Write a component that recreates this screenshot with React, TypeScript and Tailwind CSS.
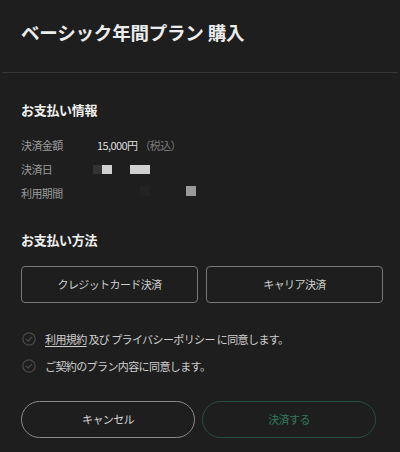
const jp = { fontFamily: '"Noto Sans CJK JP", "Noto Sans", sans-serif' };

function CheckCircle() {
  return (
    <svg width="14" height="14" viewBox="0 0 14 14" fill="none" className="shrink-0">
      <circle cx="7" cy="7" r="6.2" stroke="#4a4a4a" strokeWidth="1.2" />
      <path d="M4.3 7.2 L6.2 9 L9.8 5.2" stroke="#4a4a4a" strokeWidth="1.2" strokeLinecap="round" strokeLinejoin="round" />
    </svg>
  );
}

export default function App() {
  return (
    <div className="h-[452px] w-[400px] overflow-hidden bg-[#1e1e1e] text-[#e6e6e6]" style={jp}>
      {/* Header */}
      <div className="flex h-[72px] items-center px-[21px] pb-[8px]">
        <h1 className="text-[18.5px] font-bold leading-none tracking-[-0.2px] text-[#ececec]">
          ベーシック年間プラン 購入
        </h1>
      </div>
      <div className="mx-[2px] h-px bg-[#363636]" />

      <div className="pl-[21px] pr-[16px]">
        {/* Payment info */}
        <h2 className="mt-[27px] text-[13px] font-bold leading-[20px] tracking-[-0.3px] text-[#f0f0f0]">お支払い情報</h2>
        <div className="mt-[16px] flex flex-col gap-[6px] text-[11px] leading-[18px] tracking-[-0.6px]">
          <div className="flex items-center">
            <span className="w-[76px] text-[#9a9a9a]">決済金額</span>
            <span className="text-[#dedede]">15,000円</span>
            <span className="ml-[2px] text-[#7a7a7a]">（税込）</span>
          </div>
          <div className="flex h-[18px] items-center">
            <span className="w-[72px] text-[#9a9a9a]">決済日</span>
            <span className="h-[9px] w-[9px] bg-[#333]" />
            <span className="h-[9px] w-[10px] bg-[#d0d0d0]" />
            <span className="ml-[18px] h-[9px] w-[20px] bg-[#d0d0d0]" />
          </div>
          <div className="flex h-[18px] items-center">
            <span className="w-[119px] text-[#9a9a9a]">利用期間</span>
            <span className="mt-[-4px] h-[10px] w-[10px] bg-[#222]" />
            <span className="ml-[36px] mt-[-4px] h-[10px] w-[10px] bg-[#9a9a9a]" />
          </div>
        </div>

        {/* Payment method */}
        <h2 className="mt-[28px] text-[13px] font-bold leading-[20px] tracking-[-0.3px] text-[#f0f0f0]">お支払い方法</h2>
        <div className="mt-[16px] flex gap-[8px] text-[11px] tracking-[-0.6px]">
          <button className="h-[37px] w-[177px] shrink-0 rounded-[4px] border border-[#777] text-[#cfcfcf]">
            クレジットカード決済
          </button>
          <button className="h-[37px] w-[177px] shrink-0 rounded-[4px] border border-[#777] text-[#cfcfcf]">
            キャリア決済
          </button>
        </div>

        {/* Agreements */}
        <div className="mt-[27px] flex flex-col gap-[9px] pl-[1px] text-[11px] leading-[18px] tracking-[-0.6px] text-[#cfcfcf]">
          <div className="flex items-center gap-[9px]">
            <CheckCircle />
            <span>
              <span className="underline underline-offset-2">利用規約</span> 及び プライバシーポリシー に同意します。
            </span>
          </div>
          <div className="flex items-center gap-[9px]">
            <CheckCircle />
            <span>ご契約のプラン内容に同意します。</span>
          </div>
        </div>

        {/* Actions */}
        <div className="mt-[26px] flex gap-[7px] text-[11px] tracking-[-0.6px]">
          <button className="h-[37px] w-[174px] shrink-0 rounded-full border border-[#8a8a8a] text-[#d6d6d6]">
            キャンセル
          </button>
          <button className="h-[37px] w-[174px] shrink-0 rounded-full border border-[#24503f] text-[#2f7a5c]">
            決済する
          </button>
        </div>
      </div>
    </div>
  );
}
